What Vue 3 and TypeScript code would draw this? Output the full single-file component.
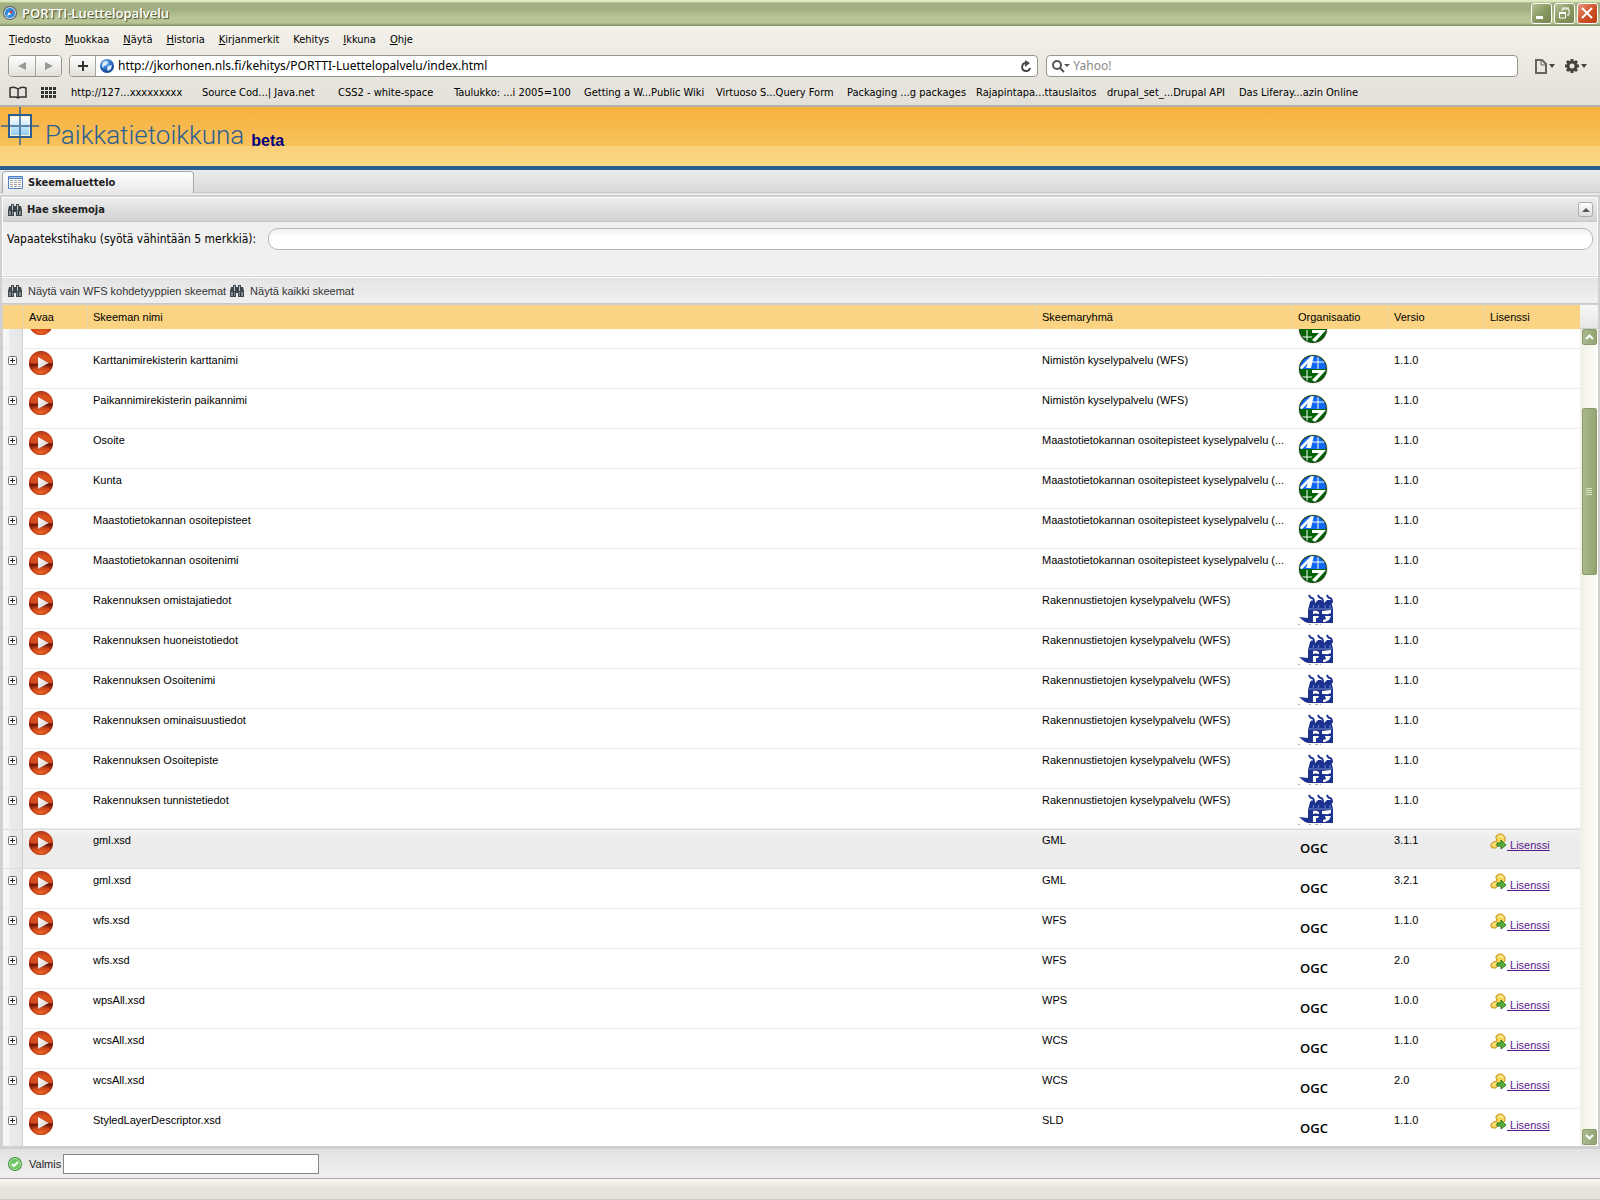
<script setup lang="ts">
import { onMounted, ref } from 'vue'

type Org = 'mml' | 'vrk' | 'ogc'

interface Schema {
  name: string
  group: string
  org: Org
  version: string
  license?: boolean
  active?: boolean
}

const menu: [string, string][] = [
  ['T', 'iedosto'],
  ['M', 'uokkaa'],
  ['N', 'äytä'],
  ['H', 'istoria'],
  ['K', 'irjanmerkit'],
  ['', 'Kehitys'],
  ['I', 'kkuna'],
  ['O', 'hje'],
]

const bookmarks = [
  'http://127...xxxxxxxxx',
  'Source Cod...| Java.net',
  'CSS2 - white-space',
  'Taulukko: ...i 2005=100',
  'Getting a W...Public Wiki',
  'Virtuoso S...Query Form',
  'Packaging ...g packages',
  'Rajapintapa...ttauslaitos',
  'drupal_set_...Drupal API',
  'Das Liferay...azin Online',
]

const nimisto = 'Nimistön kyselypalvelu (WFS)'
const maasto = 'Maastotietokannan osoitepisteet kyselypalvelu (...'
const rakennus = 'Rakennustietojen kyselypalvelu (WFS)'

const schemas: Schema[] = [
  { name: '', group: '', org: 'mml', version: '' },
  { name: 'Karttanimirekisterin karttanimi', group: nimisto, org: 'mml', version: '1.1.0' },
  { name: 'Paikannimirekisterin paikannimi', group: nimisto, org: 'mml', version: '1.1.0' },
  { name: 'Osoite', group: maasto, org: 'mml', version: '1.1.0' },
  { name: 'Kunta', group: maasto, org: 'mml', version: '1.1.0' },
  { name: 'Maastotietokannan osoitepisteet', group: maasto, org: 'mml', version: '1.1.0' },
  { name: 'Maastotietokannan osoitenimi', group: maasto, org: 'mml', version: '1.1.0' },
  { name: 'Rakennuksen omistajatiedot', group: rakennus, org: 'vrk', version: '1.1.0' },
  { name: 'Rakennuksen huoneistotiedot', group: rakennus, org: 'vrk', version: '1.1.0' },
  { name: 'Rakennuksen Osoitenimi', group: rakennus, org: 'vrk', version: '1.1.0' },
  { name: 'Rakennuksen ominaisuustiedot', group: rakennus, org: 'vrk', version: '1.1.0' },
  { name: 'Rakennuksen Osoitepiste', group: rakennus, org: 'vrk', version: '1.1.0' },
  { name: 'Rakennuksen tunnistetiedot', group: rakennus, org: 'vrk', version: '1.1.0' },
  { name: 'gml.xsd', group: 'GML', org: 'ogc', version: '3.1.1', license: true, active: true },
  { name: 'gml.xsd', group: 'GML', org: 'ogc', version: '3.2.1', license: true },
  { name: 'wfs.xsd', group: 'WFS', org: 'ogc', version: '1.1.0', license: true },
  { name: 'wfs.xsd', group: 'WFS', org: 'ogc', version: '2.0', license: true },
  { name: 'wpsAll.xsd', group: 'WPS', org: 'ogc', version: '1.0.0', license: true },
  { name: 'wcsAll.xsd', group: 'WCS', org: 'ogc', version: '1.1.0', license: true },
  { name: 'wcsAll.xsd', group: 'WCS', org: 'ogc', version: '2.0', license: true },
  { name: 'StyledLayerDescriptor.xsd', group: 'SLD', org: 'ogc', version: '1.1.0', license: true },
]

const url = ref('http://jkorhonen.nls.fi/kehitys/PORTTI-Luettelopalvelu/index.html')
const webSearch = ref('')
const freeText = ref('')
const status = ref('')
const viewport = ref<HTMLElement | null>(null)

onMounted(() => {
  // the list opens half a row down
  if (viewport.value) viewport.value.scrollTop = 20
})
</script>

<template>
  <div class="window">
    <svg class="defs" width="0" height="0" aria-hidden="true">
      <defs>
        <linearGradient id="g-play" x1="0" y1="0" x2="0" y2="1">
          <stop offset="0" stop-color="#b8381a" />
          <stop offset="0.25" stop-color="#dd5220" />
          <stop offset="0.5" stop-color="#d2471b" />
        </linearGradient>
        <radialGradient id="g-play-low" cx="0.5" cy="0.9" r="0.8">
          <stop offset="0" stop-color="#f06a28" />
          <stop offset="0.6" stop-color="#cf4418" />
          <stop offset="1" stop-color="#6e1a08" />
        </radialGradient>
        <linearGradient id="g-arrow" x1="0" y1="0" x2="1" y2="1">
          <stop offset="0" stop-color="#ffffff" />
          <stop offset="1" stop-color="#c9c9c4" />
        </linearGradient>
        <linearGradient id="g-pane" x1="0" y1="0" x2="0" y2="1">
          <stop offset="0" stop-color="#ffffff" />
          <stop offset="1" stop-color="#8fcdf0" />
        </linearGradient>
        <radialGradient id="g-globe" cx="0.4" cy="0.3" r="0.8">
          <stop offset="0" stop-color="#8cc4f4" />
          <stop offset="0.5" stop-color="#2a6fc4" />
          <stop offset="1" stop-color="#0a2f74" />
        </radialGradient>
        <clipPath id="c-disc"><circle cx="15" cy="15" r="13" /></clipPath>
        <symbol id="i-play" viewBox="0 0 24 24">
          <circle cx="12" cy="12" r="12" fill="url(#g-play)" />
          <path d="M0 12 Q4 13 8 12.500 L16 12.500 Q20 12 24 12 A12 12 0 0 1 0 12Z" fill="url(#g-play-low)" />
          <circle cx="12" cy="12" r="11.500" fill="none" stroke="#a03416" stroke-width="1" opacity="0.6" />
          <path d="M9 6 L19.500 12 L9 18Z" fill="url(#g-arrow)" />
        </symbol>
        <symbol id="i-binoc" viewBox="0 0 14 14">
          <path d="M3 1h3v2h2V1h3v2h2l1 4v6H8V9H6v4H0V7l1-4h2z" fill="#3f474c" />
          <path d="M1 8h4v4H1zM9 8h4v4H9z" fill="#7f8c92" />
          <path d="M4 2h1v5H4zM9 2h1v5H9z" fill="#b9c3c8" />
          <path d="M3 8h1v4H3zM10 8h1v4h-1z" fill="#30373b" />
        </symbol>
        <symbol id="i-mml" viewBox="0 0 30 30">
          <circle cx="15" cy="15" r="15" fill="#e9edd2" />
          <circle cx="15" cy="15" r="14" fill="#173a22" />
          <g clip-path="url(#c-disc)">
            <path d="M0 0h30v15H0z" fill="#1168f2" />
            <path d="M0 15h30v15H0z" fill="#046404" />
            <path d="M20 0v15M14 8h16M9 16v14M2 23h12" stroke="#fff" stroke-width="1" fill="none" />
            <path d="M1 14 L13 2 L16 1 L13 14 L8 14 L10 9 L4 15Z" fill="#fff" />
            <path d="M14 16 L28 16 L17 28 L14 26 L21 19 L14 19Z" fill="#fff" />
          </g>
        </symbol>
        <symbol id="i-vrk" viewBox="0 0 36 32">
          <path d="M10 16 L12 8 L14 6 L17 9 L20 6 L23 6 L26 9 L29 6 L33 6 L35 15 V29 H10 L7 28 L1 23 L10 24Z" fill="#1b3291" />
          <path d="M11 1 Q12 4 14 4 T16 9 M20 1 Q21 4 23 4 T25 9 M29 1 Q30 4 32 4 T34 9" fill="none" stroke="#1b3291" stroke-width="2" />
          <path d="M15 17 Q18 16 21 18 V20 Q18 19 15 20ZM15 22 L21 22 L20 24 H18 V28 H15Z" fill="#fff" />
          <path d="M24 17 L33 16 V19 Q29 21 27 20 L24 20ZM27 22 L33 22 L31 26 L27 28 H25 V26 L28 25Z" fill="#fff" />
          <path d="M11 15h23M16 11l-1 3M21 11l-1 3M27 11v3M32 11v3" stroke="#7587c4" stroke-width="1" fill="none" />
          <path d="M0 30.500h2M11 30.500h2M17 30.500h3M22 30.500h1" stroke="#b0b0b0" stroke-width="1" />
        </symbol>
        <symbol id="i-key" viewBox="0 0 17 17">
          <path d="M6 3l3-2h3l3 3v4l-3 3H9l-3 4H3l-2-1v-3l2-2 4-1-1-3z" fill="#f6d55c" stroke="#c79524" stroke-width="1" />
          <path d="M9 4l2-1 2 2" stroke="#fff6c0" stroke-width="1" fill="none" />
          <path d="M3 12l2-2" stroke="#fff6c0" stroke-width="1" />
          <path d="M7 10h4V7l5 5-5 4v-3H7z" fill="#58b13f" stroke="#2d7a1f" stroke-width="1" />
        </symbol>
      </defs>
    </svg>

    <header class="titlebar">
      <svg class="app-icon" width="14" height="14" viewBox="0 0 14 14" aria-hidden="true">
        <circle cx="7" cy="7" r="7" fill="#55606c" />
        <circle cx="7" cy="7" r="6" fill="#cfd8e0" />
        <circle cx="7" cy="7" r="5" fill="#2f8ad8" />
        <path d="M10 4L8 8L6 6Z" fill="#e33" />
        <path d="M4 10L6 6L8 8Z" fill="#fff" />
      </svg>
      <h1 class="title">PORTTI-Luettelopalvelu</h1>
      <div class="win-buttons">
        <button class="win-btn" type="button" aria-label="Pienennä">
          <svg width="19" height="19" viewBox="0 0 19 19"><path d="M4 12h7v3H4z" fill="#fff" /></svg>
        </button>
        <button class="win-btn" type="button" aria-label="Palauta">
          <svg width="19" height="19" viewBox="0 0 19 19">
            <path d="M7 7V5h7v6h-2M7 4h7" fill="none" stroke="#fff" stroke-width="1" />
            <path d="M4 8h7v2H4z" fill="#fff" />
            <path d="M4.500 9v5h6V9" fill="none" stroke="#fff" stroke-width="1" />
          </svg>
        </button>
        <button class="win-btn close" type="button" aria-label="Sulje">
          <svg width="19" height="19" viewBox="0 0 19 19"><path d="M4 4l10 10M14 4L4 14" stroke="#fff" stroke-width="2" /></svg>
        </button>
      </div>
    </header>

    <div class="chrome">
      <nav class="menu">
        <button v-for="m in menu" :key="m[1]" type="button"><u>{{ m[0] }}</u>{{ m[1] }}</button>
      </nav>
      <div class="toolbar">
        <div class="nav-pair">
          <button type="button" aria-label="Takaisin">
            <svg width="10" height="10" viewBox="0 0 10 10"><path d="M9 1v8L1 5z" fill="#9a9a95" /></svg>
          </button>
          <button type="button" aria-label="Eteenpäin">
            <svg width="10" height="10" viewBox="0 0 10 10"><path d="M1 1v8l8-4z" fill="#9a9a95" /></svg>
          </button>
        </div>
        <div class="address">
          <button class="add" type="button" aria-label="Lisää kirjanmerkki">
            <svg width="10" height="10" viewBox="0 0 10 10"><path d="M4 0h2v4h4v2H6v4H4V6H0V4h4z" fill="#333" /></svg>
          </button>
          <svg class="globe" width="14" height="14" viewBox="0 0 14 14" aria-hidden="true">
            <circle cx="7" cy="7" r="7" fill="url(#g-globe)" />
            <path d="M3 3l4-1 1 2-2 2-2 1-1 2-1-2zM8 7l4-1-1 4-3 2-1-2z" fill="#dcecfb" />
          </svg>
          <input v-model="url" type="text" aria-label="Osoite" />
          <button class="reload" type="button" aria-label="Lataa uudelleen">
            <svg width="12" height="13" viewBox="0 0 12 13">
              <path d="M6 3A4 4 0 1 0 10 8" fill="none" stroke="#4a4a4a" stroke-width="2" />
              <path d="M5 0l5 3-5 4z" fill="#4a4a4a" />
            </svg>
          </button>
        </div>
        <div class="websearch">
          <svg width="20" height="14" viewBox="0 0 20 14" aria-hidden="true">
            <circle cx="6" cy="6" r="4" fill="none" stroke="#555" stroke-width="2" />
            <path d="M9 9l4 4" stroke="#555" stroke-width="2" />
            <path d="M13 5h6l-3 3z" fill="#555" />
          </svg>
          <input v-model="webSearch" type="text" placeholder="Yahoo!" aria-label="Yahoo!" />
        </div>
        <div class="page-tools">
          <button type="button" aria-label="Sivu">
            <svg width="22" height="16" viewBox="0 0 22 16">
              <path d="M2 2h6l4 4v9H2z" fill="none" stroke="#66645e" stroke-width="2" />
              <path d="M7 2v5h5" fill="none" stroke="#66645e" stroke-width="1" />
              <path d="M15 6h6l-3 4z" fill="#45433d" />
            </svg>
          </button>
          <button type="button" aria-label="Asetukset">
            <svg width="24" height="16" viewBox="0 0 24 16">
              <g stroke="#45433d" stroke-width="3">
                <path d="M8 1v3M8 12v3M1 8h3M12 8h3M3 3l2 2M11 11l2 2M13 3l-2 2M5 11l-2 2" />
              </g>
              <circle cx="8" cy="8" r="4" fill="none" stroke="#45433d" stroke-width="3" />
              <path d="M17 6h6l-3 4z" fill="#45433d" />
            </svg>
          </button>
        </div>
      </div>
      <nav class="bookmarks">
        <button type="button" aria-label="Kirjanmerkit">
          <svg width="18" height="13" viewBox="0 0 18 13">
            <path d="M9 3Q5 0 1 2v9h6l2 1 2-1h6V2Q13 0 9 3v9" fill="none" stroke="#333" stroke-width="1.500" />
          </svg>
        </button>
        <button type="button" aria-label="Top Sites">
          <svg width="16" height="11" viewBox="0 0 16 11">
            <path d="M0 0h3v3H0zM4 0h3v3H4zM8 0h3v3H8zM12 0h3v3h-3zM0 4h3v3H0zM4 4h3v3H4zM8 4h3v3H8zM12 4h3v3h-3zM0 8h3v3H0zM4 8h3v3H4zM8 8h3v3H8zM12 8h3v3h-3z" fill="#333" />
          </svg>
        </button>
        <a v-for="b in bookmarks" :key="b" href="#">{{ b }}</a>
      </nav>
    </div>

    <div class="banner">
      <svg width="38" height="38" viewBox="0 0 38 38" aria-hidden="true">
        <rect x="8" y="8" width="22" height="22" fill="#fff3cf" stroke="#2b5f94" stroke-width="2" />
        <rect x="10" y="10" width="18" height="18" fill="url(#g-pane)" />
        <path d="M19 0v38M0 19h38" stroke="#2b5f94" stroke-width="2" opacity="0.7" />
      </svg>
      <span class="brand">Paikkatietoikkuna</span>
      <span class="beta">beta</span>
    </div>

    <div class="tabs">
      <button class="tab" type="button">
        <svg width="15" height="13" viewBox="0 0 15 13" aria-hidden="true">
          <rect x="0" y="0" width="15" height="13" rx="1" fill="#4f7fc4" />
          <path d="M1 3h13v9H1z" fill="#fff" />
          <path d="M1 1h13v1H1z" fill="#a9c6ee" />
          <path d="M2 4h3v1H2zM6 4h3v1H6zM10 4h3v1h-3zM2 6h3v1H2zM6 6h3v1H6zM10 6h3v1h-3zM2 8h3v1H2zM6 8h3v1H6zM10 8h3v1h-3zM2 10h3v1H2zM6 10h3v1H6zM10 10h3v1h-3z" fill="#a5a5a5" />
        </svg>
        Skeemaluettelo
      </button>
    </div>

    <main class="frame">
      <section class="search-panel">
        <div class="panel-head">
          <svg width="14" height="14"><use href="#i-binoc" /></svg>
          <h2>Hae skeemoja</h2>
          <button class="collapse" type="button" aria-label="Pienennä paneeli">
            <svg width="8" height="4" viewBox="0 0 8 4"><path d="M4 0l4 4H0z" fill="#555" /></svg>
          </button>
        </div>
        <div class="panel-body">
          <label for="free">Vapaatekstihaku (syötä vähintään 5 merkkiä):</label>
          <input id="free" v-model="freeText" type="text" />
        </div>
      </section>

      <div class="filters">
        <button type="button"><svg width="14" height="14"><use href="#i-binoc" /></svg>Näytä vain WFS kohdetyyppien skeemat</button>
        <button type="button"><svg width="14" height="14"><use href="#i-binoc" /></svg>Näytä kaikki skeemat</button>
      </div>

      <div class="grid">
        <div ref="viewport" class="viewport">
          <table>
            <colgroup>
              <col class="c-exp" /><col class="c-open" /><col /><col class="c-group" /><col class="c-org" /><col class="c-ver" /><col class="c-lic" />
            </colgroup>
            <thead>
              <tr>
                <th></th>
                <th>Avaa</th>
                <th>Skeeman nimi</th>
                <th>Skeemaryhmä</th>
                <th>Organisaatio</th>
                <th>Versio</th>
                <th>Lisenssi</th>
              </tr>
            </thead>
            <tbody>
              <tr v-for="(s, i) in schemas" :key="i" :class="{ active: s.active }">
                <td class="expander">
                  <button type="button" aria-label="Laajenna">
                    <svg width="9" height="9" viewBox="0 0 9 9">
                      <rect x="0.500" y="0.500" width="8" height="8" rx="1" fill="#fff" stroke="#6f6f6f" />
                      <path d="M2 4h5v1H2zM4 2h1v5H4z" fill="#222" />
                    </svg>
                  </button>
                </td>
                <td class="open">
                  <button type="button" aria-label="Avaa"><svg width="24" height="24"><use href="#i-play" /></svg></button>
                </td>
                <td>{{ s.name }}</td>
                <td>{{ s.group }}</td>
                <td class="org">
                  <svg v-if="s.org === 'mml'" width="30" height="30"><use href="#i-mml" /></svg>
                  <svg v-else-if="s.org === 'vrk'" width="36" height="32"><use href="#i-vrk" /></svg>
                  <span v-else class="ogc">OGC</span>
                </td>
                <td>{{ s.version }}</td>
                <td class="lic">
                  <a v-if="s.license" href="#"><svg width="17" height="17"><use href="#i-key" /></svg><span>&nbsp;Lisenssi</span></a>
                </td>
              </tr>
            </tbody>
          </table>
        </div>
        <div class="scroll">
          <div class="scroll-head"></div>
          <button class="arrow" type="button" aria-label="Ylös">
            <svg width="9" height="6" viewBox="0 0 9 6"><path d="M1 5l3.500-3.500L8 5" fill="none" stroke="#fff" stroke-width="2" /></svg>
          </button>
          <div class="gap-top"></div>
          <div class="thumb">
            <svg width="7" height="8" viewBox="0 0 7 8"><path d="M0 0h6v1H0zM0 2h6v1H0zM0 4h6v1H0zM0 6h6v1H0z" fill="#d9e4bf" /></svg>
          </div>
          <div class="gap-bottom"></div>
          <button class="arrow" type="button" aria-label="Alas">
            <svg width="9" height="6" viewBox="0 0 9 6"><path d="M1 1l3.500 3.500L8 1" fill="none" stroke="#fff" stroke-width="2" /></svg>
          </button>
        </div>
      </div>
    </main>

    <footer class="state">
      <svg width="14" height="14" viewBox="0 0 14 14" aria-hidden="true">
        <circle cx="7" cy="7" r="7" fill="#3d8f3d" />
        <circle cx="7" cy="7" r="5.500" fill="#6cc560" stroke="#b5e2a8" stroke-width="1" />
        <path d="M4 7l2 2 4-4" fill="none" stroke="#fff" stroke-width="2" />
      </svg>
      <label for="state">Valmis</label>
      <input id="state" v-model="status" type="text" />
    </footer>
    <div class="statusbar"></div>
  </div>
</template>

<style>
body {
  margin: 0;
}
</style>

<style scoped>
.window {
  display: flex;
  flex-direction: column;
  height: 100vh;
  font: 11px/14px "Liberation Sans", Arial, sans-serif;
  color: #000;
  background: #fff;
  overflow: hidden;
}
.window * {
  box-sizing: border-box;
}
.defs {
  position: absolute;
}
svg {
  display: block;
  flex: none;
}
button {
  padding: 0;
  border: 0;
  background: none;
  font: inherit;
  color: inherit;
}
input {
  font: inherit;
  color: inherit;
  min-width: 0;
}

.titlebar {
  display: flex;
  align-items: center;
  height: 26px;
  flex: none;
  padding: 0 2px 0 3px;
  background: linear-gradient(#e3efc6 0, #d2deb2 2px, #a3b084 3px, #a2af82 9px, #b9c596 18px, #b9c596 23px, #8b9a6c 25px, #8b9a6c 26px);
}
.title {
  flex: 1;
  margin: 0 0 0 5px;
  font: 600 13px/18px "Open Sans", sans-serif;
  color: #fff;
  text-shadow: 1px 1px 1px #3f4a28;
}
.win-buttons {
  display: flex;
  gap: 2px;
}
.win-btn {
  width: 21px;
  height: 21px;
  border: 1px solid #fff;
  border-radius: 3px;
  background: linear-gradient(135deg, #b6c296, #8a9a63 50%, #77864f);
}
.win-btn.close {
  background: linear-gradient(135deg, #e8997e, #d0522c 50%, #bf3f12);
}

.chrome {
  flex: none;
  padding: 0 8px;
  border-bottom: 2px solid #b3b1ab;
  background: linear-gradient(#f3f1ea, #e2e0d8);
  font: 11px/14px "DejaVu Sans Condensed", "DejaVu Sans", sans-serif;
}
.menu {
  display: flex;
  gap: 14px;
  height: 26px;
  padding: 2px 0 0 1px;
  align-items: center;
}
.toolbar {
  display: flex;
  align-items: center;
  height: 28px;
  font: 12px/18px "Noto Sans", sans-serif;
}
.nav-pair,
.address,
.websearch {
  display: flex;
  align-items: center;
  height: 22px;
  border: 1px solid #96958e;
  border-radius: 4px;
  background: #fff;
  overflow: hidden;
}
.nav-pair button,
.add {
  display: flex;
  align-items: center;
  justify-content: center;
  width: 26px;
  height: 20px;
  background: linear-gradient(#fff, #e2e0da);
}
.nav-pair button + button,
.add {
  border-right: 1px solid #a5a49d;
}
.nav-pair button + button {
  border-right: 0;
  border-left: 1px solid #a5a49d;
}
.address {
  flex: 970 1 0;
  margin-left: 7px;
}
.globe {
  margin: 0 4px 0 4px;
}
.address input,
.websearch input {
  flex: 1;
  padding: 0;
  border: 0;
  outline: 0;
  background: none;
}
.reload {
  margin-right: 5px;
}
.websearch {
  flex: 467 1 0;
  margin-left: 8px;
  padding-left: 4px;
  gap: 2px;
}
.websearch input::placeholder {
  color: #888;
  opacity: 1;
}
.page-tools {
  display: flex;
  gap: 8px;
  margin: 0 4px 0 16px;
}
.bookmarks {
  display: grid;
  grid-template-columns: 32px 30px 131px 136px 116px 130px 132px 131px 129px 131px 132px auto;
  align-items: center;
  height: 25px;
  padding-left: 1px;
}
.bookmarks a {
  color: #000;
  text-decoration: none;
  white-space: nowrap;
}

.banner {
  display: flex;
  align-items: flex-start;
  flex: none;
  height: 63px;
  padding-left: 1px;
  border-bottom: 4px solid #2a5e8c;
  background: linear-gradient(#f7b03e 0, #f8c25c 39px, #fad07a 39px, #fbd882 56px, #ffd391 59px);
}
.brand {
  margin-left: 6px;
  padding-top: 12px;
  font: 300 26px/32px Roboto, "Liberation Sans", sans-serif;
  color: #2b5f94;
}
.beta {
  margin-left: 7px;
  padding-top: 24px;
  font: bold 16px/20px "Liberation Sans", Arial, sans-serif;
  color: #000080;
}

.tabs {
  flex: none;
  display: flex;
  align-items: flex-end;
  height: 25px;
  padding: 0 2px;
  border-bottom: 2px solid #e8e8e8;
  background: linear-gradient(#ececec, #d9d9d9 22px, #c6c6c6 22px, #c6c6c6 23px);
}
.tab {
  display: flex;
  align-items: center;
  gap: 5px;
  width: 192px;
  height: 22px;
  padding: 0 5px;
  border: 1px solid #a9a9a9;
  border-bottom: 0;
  border-radius: 4px 4px 0 0;
  background: linear-gradient(#fff, #e8e8e8);
  font: bold 11px/14px "DejaVu Sans Condensed", "DejaVu Sans", sans-serif;
  color: #222;
}

.frame {
  display: flex;
  flex-direction: column;
  flex: 1;
  min-height: 0;
  padding: 2px 2px 0;
  background: #d0d0d0;
}
.search-panel {
  flex: none;
  border: 1px solid #fff;
}
.panel-head {
  display: flex;
  align-items: center;
  gap: 5px;
  height: 24px;
  padding: 0 4px 0 5px;
  border-bottom: 1px solid #c6c6c6;
  background: linear-gradient(#ececec, #d3d3d3);
}
.panel-head h2 {
  flex: 1;
  margin: 0;
  font: bold 11px/14px "DejaVu Sans Condensed", "DejaVu Sans", sans-serif;
  color: #222;
}
.collapse {
  display: flex;
  align-items: center;
  justify-content: center;
  width: 15px;
  height: 15px;
  border: 1px solid #aaa;
  border-radius: 3px;
  background: linear-gradient(#fff, #ddd);
}
.panel-body {
  display: flex;
  align-items: flex-start;
  height: 53px;
  padding: 6px 4px 0;
  background: #f0f0f0;
}
.panel-body label {
  width: 261px;
  padding-top: 4px;
  font: 12px/14px "DejaVu Sans Condensed", "DejaVu Sans", sans-serif;
}
.panel-body input {
  flex: 1;
  height: 22px;
  padding: 0 10px;
  border: 1px solid #b5b8bb;
  border-radius: 10px;
  background: linear-gradient(#eef1f2, #fff 8px);
}
.filters {
  display: flex;
  flex: none;
  gap: 4px;
  height: 27px;
  margin: 1px 0;
  padding-left: 6px;
  border-top: 1px solid #fff;
  border-bottom: 1px solid #c9c9c9;
  background: linear-gradient(#e4e4e4, #f0f0f0);
  color: #333;
}
.filters button {
  display: flex;
  align-items: center;
  gap: 6px;
}

.grid {
  display: flex;
  flex: 1;
  min-height: 0;
  margin-left: 1px;
  background: #fff;
}
.viewport {
  flex: 1;
  overflow: auto;
  scrollbar-width: none;
}
table {
  width: 100%;
  table-layout: fixed;
  border-spacing: 0;
}
.c-exp {
  width: 20px;
}
.c-open {
  width: 64px;
}
.c-group {
  width: 256px;
}
.c-org,
.c-ver,
.c-lic {
  width: 96px;
}
th {
  position: sticky;
  top: 0;
  z-index: 1;
  height: 24px;
  padding: 0 5px;
  border-left: 1px solid #ecd4ac;
  background: #fad482;
  font-weight: normal;
  text-align: left;
}
th:first-child {
  border-left-color: #fad482;
}
td {
  height: 40px;
  padding: 4px 6px 0;
  border-bottom: 1px solid #ededed;
  vertical-align: top;
  white-space: nowrap;
}
td.expander {
  padding: 7px 5px 0;
  border-right: 1px solid #d0d0d0;
  background: linear-gradient(90deg, #f7f7f7 0, #f3f4f5 6px, #e9eaec 7px, #e4e6e8);
}
td.open {
  padding-top: 2px;
}
td.org {
  padding-top: 5px;
}
td.lic {
  padding-top: 4px;
}
tr.active td {
  border-bottom-color: #ddd;
  box-shadow: inset 0 1px #ddd;
}
tr.active td:not(.expander) {
  background: linear-gradient(#f3f3f3, #ececec 12px);
}
td button {
  display: block;
}
.ogc {
  display: block;
  padding: 5px 0 0 2px;
  font: 600 13px/18px "Open Sans", sans-serif;
}
.lic a {
  display: flex;
  align-items: flex-start;
  color: #551a8b;
}
.lic a span {
  padding-top: 5px;
}
.scroll {
  display: flex;
  flex-direction: column;
  width: 18px;
  padding: 0 1px 1px 2px;
  background: linear-gradient(90deg, #f1efe6, #fefefa);
}
.scroll-head {
  height: 24px;
  flex: none;
  margin: 0 -1px 0 -2px;
  border-bottom: 1px solid #ccc;
  background: linear-gradient(#f8f8f8, #e6e6e6);
}
.arrow {
  display: flex;
  align-items: center;
  justify-content: center;
  height: 16px;
  flex: none;
  border: 1px solid #8b9b6b;
  border-radius: 2px;
  background: linear-gradient(90deg, #a9b98e, #93a471);
}
.gap-top {
  flex: 63 1 0;
}
.gap-bottom {
  flex: 555 1 0;
}
.thumb {
  display: flex;
  align-items: center;
  justify-content: center;
  flex: 166 1 0;
  border: 1px solid #8b9b6b;
  border-radius: 2px;
  background: linear-gradient(90deg, #a9b98e, #93a471);
}

.state {
  display: flex;
  align-items: center;
  flex: none;
  height: 33px;
  padding: 1px 8px 0;
  border-top: 3px solid #d0d0d0;
  border-bottom: 1px solid #aaa;
  background: linear-gradient(#e2e2e2, #f0f0f0);
}
.state label {
  margin-left: 7px;
  color: #222;
}
.state input {
  width: 256px;
  height: 20px;
  margin-left: 2px;
  border: 1px solid #888;
  background: #fff;
}
.statusbar {
  flex: none;
  height: 21px;
  border-bottom: 1px solid #ccc9c0;
  background: linear-gradient(#faf8f2, #e6e3da 10px);
}
</style>
